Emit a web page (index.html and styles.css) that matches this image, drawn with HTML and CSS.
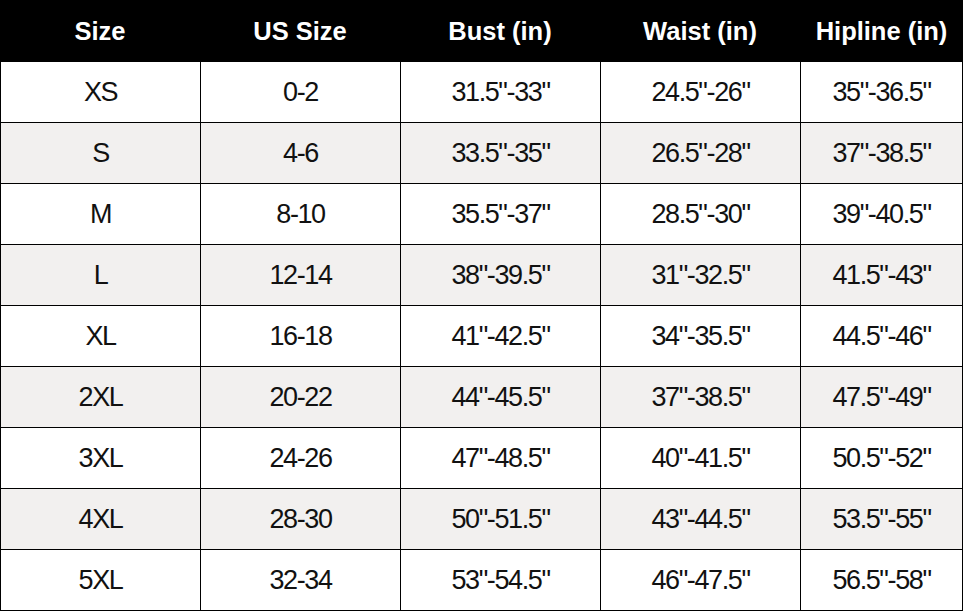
FILE: index.html
```html
<!DOCTYPE html>
<html lang="en">
<head>
<meta charset="utf-8">
<title>Size Chart</title>
<link rel="stylesheet" href="styles.css">
</head>
<body>
<div class="chart">
  <div class="head">Size</div>
  <div class="head">US Size</div>
  <div class="head">Bust (in)</div>
  <div class="head">Waist (in)</div>
  <div class="head">Hipline (in)</div>

  <div class="cell">XS</div><div class="cell">0-2</div><div class="cell">31.5"-33"</div><div class="cell">24.5"-26"</div><div class="cell last">35"-36.5"</div>
  <div class="cell alt">S</div><div class="cell alt">4-6</div><div class="cell alt">33.5"-35"</div><div class="cell alt">26.5"-28"</div><div class="cell alt last">37"-38.5"</div>
  <div class="cell">M</div><div class="cell">8-10</div><div class="cell">35.5"-37"</div><div class="cell">28.5"-30"</div><div class="cell last">39"-40.5"</div>
  <div class="cell alt">L</div><div class="cell alt">12-14</div><div class="cell alt">38"-39.5"</div><div class="cell alt">31"-32.5"</div><div class="cell alt last">41.5"-43"</div>
  <div class="cell">XL</div><div class="cell">16-18</div><div class="cell">41"-42.5"</div><div class="cell">34"-35.5"</div><div class="cell last">44.5"-46"</div>
  <div class="cell alt">2XL</div><div class="cell alt">20-22</div><div class="cell alt">44"-45.5"</div><div class="cell alt">37"-38.5"</div><div class="cell alt last">47.5"-49"</div>
  <div class="cell">3XL</div><div class="cell">24-26</div><div class="cell">47"-48.5"</div><div class="cell">40"-41.5"</div><div class="cell last">50.5"-52"</div>
  <div class="cell alt">4XL</div><div class="cell alt">28-30</div><div class="cell alt">50"-51.5"</div><div class="cell alt">43"-44.5"</div><div class="cell alt last">53.5"-55"</div>
  <div class="cell">5XL</div><div class="cell">32-34</div><div class="cell">53"-54.5"</div><div class="cell">46"-47.5"</div><div class="cell last">56.5"-58"</div>
</div>
</body>
</html>
```

FILE: styles.css
```css
html, body {
  margin: 0;
  padding: 0;
  background: #ffffff;
}

.chart {
  display: grid;
  grid-template-columns: 200px 200px 200px 200px 163px;
  grid-template-rows: 62px repeat(9, 61px);
  width: 963px;
  font-family: "Liberation Sans", Arial, sans-serif;
}

.head {
  background: #000000;
  color: #ffffff;
  font-weight: bold;
  font-size: 25.5px;
  display: flex;
  align-items: center;
  justify-content: center;
}

.cell {
  box-sizing: border-box;
  border-left: 1px solid #000;
  border-bottom: 1px solid #000;
  background: #ffffff;
  color: #111111;
  font-size: 27px;
  letter-spacing: -1.4px;
  display: flex;
  align-items: center;
  justify-content: center;
}

.cell.alt {
  background: #f2f0ef;
}

.cell.last {
  border-right: 1px solid #000;
}
```
